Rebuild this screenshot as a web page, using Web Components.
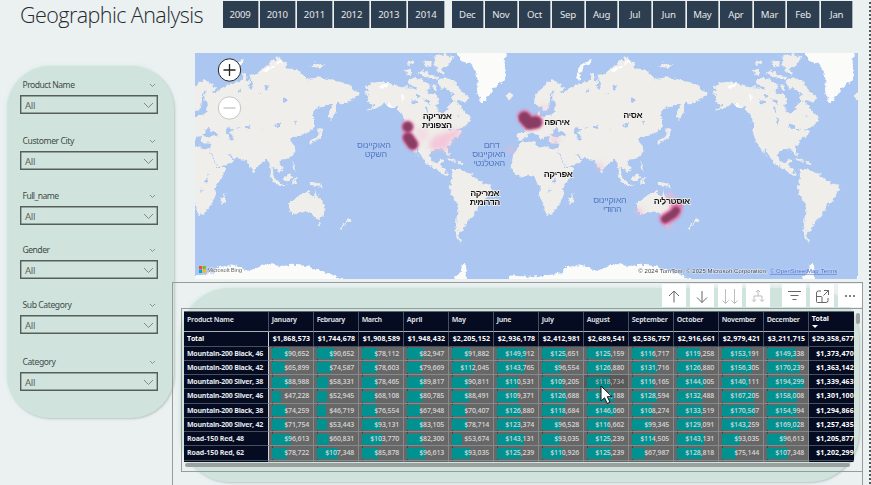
<!DOCTYPE html>
<html lang="en">
<head>
<meta charset="utf-8">
<title>Geographic Analysis</title>
<style>
html,body{margin:0;width:871px;height:485px;overflow:hidden;background:#ebf0f1;font-family:"Open Sans","Noto Sans",sans-serif}
</style>
</head>
<body>
<geo-report></geo-report>
<script>
const define = (name, html, setup) => customElements.define(name, class extends HTMLElement {
  connectedCallback() {
    if (this.shadowRoot) return;
    const t = document.createElement('template');
    t.innerHTML = typeof html === 'function' ? html(this) : html;
    this.attachShadow({mode: 'open'}).append(t.content.cloneNode(true));
    if (setup) setup(this);
  }
});

/* Text line whose tracking is adjusted to span the width in "w". */
define('fit-text', '<style>:host{display:inline-block;white-space:pre}span{display:inline-block}</style><span><slot></slot></span>', el => {
  const w = +el.getAttribute('w'), s = el.shadowRoot.querySelector('span'), n = el.textContent.length;
  const now = s.getBoundingClientRect().width;
  if (w && now) { s.style.letterSpacing = ((w - now) / n) + 'px'; el.style.width = w + 'px'; }
});

define('tile-slicer', el => `<style>
:host{display:flex;gap:1px;height:27px}
div{flex:1;display:flex;align-items:center;justify-content:center;background:#2d3e50;color:#e6e8ea;font-size:9.6px;font-family:"Noto Sans",sans-serif;border-right:1px solid #a9b2b7;letter-spacing:-.2px;box-sizing:border-box}
</style>${el.getAttribute('items').split(' ').map(i => `<div>${i}</div>`).join('')}`);

define('drop-filter', el => `<style>
:host{display:flex;flex-direction:column;gap:4px}
header{display:flex;justify-content:space-between;align-items:center;height:12px;padding:0 2px 0 2.500px;font:8.6px "Noto Sans",sans-serif;color:#414b48}
.box{box-sizing:border-box;height:19px;border:1px solid #565e5b;box-shadow:inset 0 0 0 .4px #565e5b;display:flex;align-items:center;justify-content:space-between;padding:1px 3px 0 4px;font:9.6px "Noto Sans",sans-serif;color:#5c6663}
svg{fill:none;stroke:#7d8a86}
</style><header><fit-text w="${el.getAttribute('w')}">${el.getAttribute('label')}</fit-text><svg width="7" height="5"><path d="M1 1l2.5 2.5L6 1" stroke-width=".9"/></svg></header>
<div class="box"><fit-text w="10">All</fit-text><svg width="11" height="7"><path d="M1 1l4.5 4.5L10 1" stroke-width="1"/></svg></div>`);

define('filter-pane', `<style>
:host{display:block;box-sizing:border-box;width:167px;height:352px;border-radius:43px;background:#d0e4dd;box-shadow:1px 1px 2px #bfc7c4,0 0 4px #cfebe1;padding:13px 16px 0 13px}
::slotted(*){margin-bottom:var(--gap,21px)}
</style><slot></slot>`);

const world = `
<g filter="url(#coast)"><g fill="#efeeea">
<path d="M-51 429L-19 423L-6 425L-8 435L6 443L21 439L46 447L60 448L62 459L72 484L81 504L108 504L101 524L81 554L76 569L79 589L66 601L62 619L46 639L26 645L20 637L14 609L4 584L6 559L-6 544L-8 531L-29 527L-54 533L-69 521L-82 504L-79 479L-69 454Z"/>
<path d="M110 577L103 609L94 614L91 596L102 586Z"/>
<path d="M-61 421V399H-39L-36 387L-46 377L-29 371L-22 364L-4 351V338L4 336L6 349L36 347L41 331H54L40 328L43 316L36 309L30 330L18 334L12 318L4 322L-12 311L-8 286L12 264L26 247L46 241L70 255L80 270L66 271L72 280L90 272L98 262L120 252L150 242L160 243L156 222L166 220L172 244L182 235L178 224L200 222L215 208L240 190L262 170L272 180L292 188L285 205L320 208L340 225L350 238L385 232L430 240L470 252L500 275L512 283L495 290L485 300L460 308L442 312L436 340L424 362L416 350L418 330L430 312L415 314L400 320L375 325L363 340L372 358V378L358 395L345 402L330 405L316 410L306 412L302 424L312 436L318 446L309 466L290 477L270 481L266 490L281 506L272 516L264 512L255 506L248 500L250 525L260 545L253 543L243 525L240 495L230 474L217 486L202 500L191 519L180 498L170 480L150 476L133 474L112 458L125 475L133 483L120 493L85 502L75 482L60 450L64 428L33 427L30 414L36 408L20 410L16 420L8 412L0 398L-2 396L14 410L7 420L4 412L-10 398L-30 402L-39 413L-48 423Z"/>
<path d="M-50 372L-42 362L-50 350L-46 334L-38 336L-30 352L-26 366ZM-62 362L-60 348L-52 348V360Z"/>
<path d="M360 200L375 186L390 194L404 196L388 203L370 202Z"/>
<path d="M356 424L370 416L383 412L388 394L385 384L400 388L392 400L389 418L374 424L362 432Z"/>
<path d="M525 260L540 250L560 243L600 250L635 262L660 262L700 270L725 282L740 282L748 300L738 318L752 342L764 336L775 318L790 303L805 310L825 335L845 355L830 375L800 390L817 396L795 415L780 430L770 445L779 468L770 465L760 448L735 447L722 460L724 485L740 490L748 479L758 480L753 500L765 510L768 520L778 522L772 528L757 522L735 505L708 490L698 474L680 445L676 452L686 474L670 452L655 425L645 400V370L640 345L615 320L590 310L570 318L553 327L530 332L552 316L530 308L538 290L522 276L540 272Z"/>
<path d="M785 507H800L830 515L850 525L870 545L905 558L895 585L885 600L865 620L850 650L830 665L822 685L808 695L806 715L816 728L800 720L796 690L800 650L805 615L785 585L776 560L786 540Z"/>
<path d="M762 477L780 475L800 486L785 484ZM804 487L820 486L818 493L806 492Z"/>
<path d="M655 240L675 232L700 240L720 255L715 275L690 275L680 262L660 258ZM645 210L665 206L668 224L650 226ZM680 220L700 210L722 226L745 228L740 236L700 230ZM730 170L765 162L790 170L775 195L756 205L765 225L740 215L735 190ZM740 240L765 232L800 250L812 270L835 294L826 308L808 300L798 306L780 295L792 284L775 268L748 260ZM700 185L725 180L724 200L704 198ZM655 185L668 178L670 190L655 196ZM725 256L740 258L740 274L728 270Z"/>
<path d="M294 610L320 595L335 580L350 578L358 571L362 585L372 590L378 569L386 592L400 608L407 625L400 650L388 658L374 652L364 640L350 634L325 640L303 645L298 625ZM384 668L394 669L390 678L385 675Z"/>
<path d="M474 654L482 660L472 668L464 676L452 690L447 686L468 668ZM354 544L385 550L400 566L385 560L362 558ZM278 538L298 518L305 526L302 542L286 544ZM238 522L248 528L268 550L290 558L268 558L250 542ZM310 534L324 536L314 540L318 552L310 552ZM306 486L312 488L314 506L322 516L310 508Z"/>
<path d="M944 287L958 280L970 285L966 293L953 298Z"/>
</g>
<g fill="#fbfbfa">
<path d="M122 242L116 222L124 200L140 188L162 180L158 187L134 200L126 220L130 240Z"/>
<path d="M795 150H950L944 185L946 220L940 243L910 265L895 285L888 306L873 306L862 280V235L858 215L842 192L815 184Z"/>
<path d="M-90 860V826L-30 830L15 828L70 820L84 802L118 796L150 802L165 814L190 808L212 797L240 792L270 798L310 794L350 798L380 808L430 825L460 840V860ZM780 860L798 830L812 815L815 797L828 790L832 860ZM970 860L985 836L1010 826V860Z"/>
</g>
<g fill="#abc7f1">
<path d="M40 405L46 390L58 386L66 394L76 392L88 406L62 410ZM104 390L116 382L126 388L122 400L132 416L120 420L112 404ZM168 382L182 376L180 386L170 388ZM250 378L262 372L272 366L270 374L258 382ZM224 258L234 252L236 268L226 272ZM284 292L290 298L286 310L278 306ZM204 280L214 276L210 284Z"/>
<path d="M36 347L48 342L50 322L58 312L44 302L42 282L50 272L44 268L35 288L34 302L38 320L34 336ZM42 538L52 538L50 550L42 550ZM34 560L38 572L34 576ZM52 520L56 526L52 530Z"/>
<path d="M740 292L752 300L772 310L780 294L764 286L748 282ZM750 376L768 372L774 384L764 390L758 384ZM772 388L790 386L780 394ZM706 320L712 320L716 340L708 336ZM676 286L688 282L692 292L680 294ZM664 300L684 304L680 311L666 308ZM700 295L722 302L718 310L704 306ZM800 340L812 344L808 350ZM716 355L722 358L720 372L714 366Z"/>
<path d="M180 240L176 262L184 270L190 255L184 238ZM150 264L154 274L146 280ZM215 385L222 384L218 390ZM140 384L150 380L145 388ZM310 370L320 360L316 372Z"/>
</g>
<g fill="none" stroke="#fff" stroke-width="7" stroke-linecap="round"><path d="M226 212L252 198M572 262L594 254M592 313L610 320M636 286L638 300M262 190L278 184"/></g></g>`;

define('heat-map', `<style>
:host{display:block;position:relative;width:663px;height:226px;background:#abc7f1;overflow:hidden}
svg{display:block}
text{font-family:"Liberation Sans","DejaVu Sans",sans-serif;text-anchor:middle}
.land{font-weight:bold;font-size:27px;fill:#161616;stroke:#f4f2ef;stroke-width:4px;paint-order:stroke}
.sea{font-size:27px;fill:#5579c4}
nav{position:absolute;left:22px;top:5px;display:flex;flex-direction:column;gap:14px}
</style>
<svg width="663" height="226" viewBox="15 159 1989 678">
<defs>
<filter id="coast" x="-200" y="100" width="1300" height="800" filterUnits="userSpaceOnUse" color-interpolation-filters="sRGB"><feTurbulence type="fractalNoise" baseFrequency=".08" numOctaves="3" seed="4"/><feDisplacementMap in="SourceGraphic" scale="16" xChannelSelector="R" yChannelSelector="G"/></filter>
<filter id="glow" x="0" y="0" width="2100" height="900" filterUnits="userSpaceOnUse"><feGaussianBlur stdDeviation="4"/></filter>
<filter id="core" x="0" y="0" width="2100" height="900" filterUnits="userSpaceOnUse"><feGaussianBlur stdDeviation="3"/></filter>
<filter id="faint" x="0" y="0" width="2100" height="900" filterUnits="userSpaceOnUse"><feGaussianBlur stdDeviation="8"/></filter>
<g id="world">${world}</g>
</defs>
<use href="#world"/><use href="#world" x="1044"/><use href="#world" x="2088"/>
<g filter="url(#faint)" fill="#f7b5d2"><path d="M735 408L770 398L795 388L820 392L806 406L780 425L772 440L778 458L762 448L725 450L716 430Z" opacity=".7"/><path d="M672 385H715V412L690 430Z" opacity=".3"/><ellipse cx="960" cy="449" rx="14" ry="12" opacity=".4"/><ellipse cx="1093" cy="418" rx="15" ry="8" opacity=".6"/><ellipse cx="1230" cy="500" rx="8" ry="12" opacity=".6"/><circle cx="1348" cy="634" r="11" opacity=".6"/><circle cx="1436" cy="677" r="9" opacity=".8"/><ellipse cx="1440" cy="594" rx="12" ry="16" opacity=".8"/><ellipse cx="1064" cy="322" rx="20" ry="8" opacity=".3"/></g>
<g fill="none" stroke="#e879ad" stroke-linecap="round" stroke-linejoin="round" stroke-width="37" filter="url(#glow)"><path d="M653 380V381M654 412L668 433"/><path d="M1003 351L1018 370L1038 366" stroke-width="43"/><path d="M1460 620L1454 640L1426 657"/></g>
<g fill="none" stroke="#8a3d63" stroke-linecap="round" stroke-linejoin="round" filter="url(#core)"><path d="M653 380V381M654 413L668 433" stroke-width="30"/><path d="M1003 353L1018 370L1038 367" stroke-width="35"/><path d="M1458 632L1451 641L1426 657" stroke-width="24"/></g>
<g class="land"><text x="742" y="357" textLength="88">אמריקה</text><text x="741" y="383" textLength="90">הצפונית</text><text x="885" y="588" textLength="88">אמריקה</text><text x="885" y="614" textLength="92">הדרומית</text><text x="1101" y="375" textLength="77">אירופה</text><text x="1329" y="354" textLength="58">אסיה</text><text x="1105" y="530" textLength="87">אפריקה</text><text x="1446" y="613" textLength="109">אוסטרליה</text></g>
<g class="sea"><text x="552" y="444" textLength="102">האוקיינוס</text><text x="558" y="472" textLength="68">השקט</text><text x="905" y="444" textLength="48">דרום</text><text x="897" y="472" textLength="101">האוקיינוס</text><text x="898" y="499" textLength="95">האטלנטי</text><text x="1260" y="608" textLength="101">האוקיינוס</text><text x="1267" y="636" textLength="56">ההודי</text></g>
<path fill="#f25022" d="M27 798h9v10h-9z"/><path fill="#7fba00" d="M38 798h9v10h-9z"/><path fill="#00a4ef" d="M27 809h9v10h-9z"/><path fill="#ffb900" d="M38 809h9v10h-9z"/>
<g style="font-size:18px" fill="#444" stroke="#fff" stroke-width="3" paint-order="stroke" stroke-opacity=".6"><text x="104" y="815" textLength="105" fill="#666">Microsoft Bing</text><text x="1539" y="818" textLength="388">© 2024 TomTom, © 2025 Microsoft Corporation,</text><g fill="#4468cc" stroke-opacity=".25"><text x="1813" y="818" textLength="146">© OpenStreetMap</text><text x="1917" y="818" textLength="49">Terms</text></g></g>
<path d="M1740 823h201" stroke="#5477d0" stroke-width="2"/>
</svg>
<nav><svg width="25" height="24"><circle cx="12.5" cy="12" r="11.2" fill="#fff" stroke="#222" stroke-width="1"/><path d="M6.5 12h12M12.500 6v12" stroke="#222" stroke-width="1.3"/></svg>
<svg width="25" height="24"><circle cx="12.5" cy="12" r="11.2" fill="#fff" stroke="#c4c4c4" stroke-width="1"/><path d="M6.500 12h12" stroke="#c4c4c4" stroke-width="1.300"/></svg></nav>`);

define('visual-tools', `<style>
:host{display:flex;gap:4px;justify-content:flex-end;height:23px}
i{display:block;width:24px;height:23px;background:#fff}i:nth-of-type(5){margin-left:8px}
svg{display:block;fill:none;stroke:#666;stroke-width:1}
.off{stroke:#bdbdbd}
</style>
<i><svg width="24" height="23"><path d="M12 18.500V7M7 12l5-5 5 5"/></svg></i>
<i><svg width="24" height="23"><path d="M12 7v11.500M7 13.500l5 5 5-5"/></svg></i>
<i><svg width="24" height="23" class="off"><path d="M7.500 5v14.500M4.500 16.500l3 3 3-3M16.500 5v14.500M13.500 16.500l3 3 3-3"/></svg></i>
<i><svg width="24" height="23" class="off"><path d="M12 6v6M8 17.500V12h8v5.500M6 15.500l2 2 2-2M14 15.500l2 2 2-2M10 8l2-2 2 2"/></svg></i>
<i><svg width="24" height="23"><path d="M6 7.500h13M8.500 11.500h8M10.500 15.500h4"/></svg></i>
<i><svg width="24" height="23"><path d="M11 7H8.500Q6.500 7 6.500 9v8.500q0 1 1 1h8.500q2 0 2-2V14M14 6.500h4.500V11M18.500 6.500L13.500 11.500M6.500 12.500h4.500q1 0 1 1v5"/></svg></i>
<i><svg width="24" height="23"><g fill="#666" stroke="none"><circle cx="8" cy="12" r="1.100"/><circle cx="12" cy="12" r="1.100"/><circle cx="16" cy="12" r="1.100"/></g></svg></i>`);

const months = 'January:25 February:28 March:20 April:15.500 May:14 June:14.500 July:12 August:23 September:36 October:26.500 November:34 December:33'.split(' ').map(s => s.split(':'));
const totals = '1,868,573 1,744,678 1,908,589 1,948,432 2,205,152 2,936,178 2,412,981 2,689,541 2,536,757 2,916,661 2,979,421 3,211,715'.split(' ');
const rows = [
['Mountain-200 Black, 46',76,'90,652 90,652 78,112 82,947 91,882 149,912 125,651 125,159 116,717 119,258 153,191 149,338','1,373,470'],
['Mountain-200 Black, 42',76,'65,899 74,587 78,603 79,669 112,045 143,765 96,554 126,880 131,716 126,880 156,305 170,239','1,363,142'],
['Mountain-200 Silver, 38',76,'88,988 58,331 78,465 89,817 90,811 110,531 109,205 118,734 116,165 144,005 140,111 194,299','1,339,463'],
['Mountain-200 Silver, 46',76,'47,228 52,945 68,108 80,785 88,491 109,371 126,688 138,188 128,594 132,488 167,205 158,008','1,301,100'],
['Mountain-200 Black, 38',76,'74,259 46,719 76,554 67,948 70,407 126,880 118,684 146,060 108,274 133,519 170,567 154,994','1,294,866'],
['Mountain-200 Silver, 42',76,'71,754 53,443 93,131 83,105 78,714 123,374 96,528 116,662 99,345 129,091 143,259 169,028','1,257,435'],
['Road-150 Red, 48',57,'96,613 60,831 103,770 82,300 53,674 143,131 93,035 125,239 114,505 143,131 93,035 96,613','1,205,877'],
['Road-150 Red, 62',57,'78,722 107,348 85,878 96,613 93,035 125,239 110,926 125,239 67,987 128,818 75,144 107,348','1,202,299']];

define('data-bar', el => `<style>
:host{display:flex;align-items:center;justify-content:flex-end;box-sizing:border-box;padding-right:3.500px;color:#d3d3d3;
background:linear-gradient(#009291,#009291) 3.500px 1.500px/calc(var(--v)*.192px) 11px no-repeat,repeating-linear-gradient(#444 0 2px,transparent 2px 3px) 3px 0/1px 100% no-repeat,#676767}
:host([hover]){background-color:#606060;color:#bcbcbc;filter:brightness(.93)}
</style><fit-text w="${el.textContent.trim().length > 7 ? 29 : 25}">${el.textContent}</fit-text>`);

define('sales-matrix', () => `<style>
:host{display:grid;grid-template-columns:84.700px repeat(12,45px) 45.300px;grid-template-rows:20px 14.500px repeat(8,14.250px) 2px;width:670px;height:151px;overflow:hidden;font-size:7px;font-weight:600;color:#e6e9ee;background:#050c22;border-top:1px solid #606a72;box-sizing:border-box}
:host>*{box-sizing:border-box;border-right:1px solid #858b8c;border-bottom:1px solid #858b8c;overflow:hidden;white-space:nowrap}
.h,.n,.t{display:flex;align-items:center;padding-left:3px;border-color:#48505e}
.h{padding-bottom:4px;border-bottom-color:#aab0b5;font-weight:700;color:#d5d9df}
.t{font-weight:700;color:#fff;padding-left:4px}
.n{border-right-color:#d0d4d6;font-weight:700}
.last{justify-content:flex-end;padding:0;border-right:0}
.sort{display:block;position:relative;padding:2px 0 0 3px}
.sort svg{position:absolute;left:3px;bottom:3px}
.end{background:#676767}.dark{background:#050c22}
</style>
<div class="h"><fit-text w="46.500">Product Name</fit-text></div>${months.map(m => `<div class="h"><fit-text w="${m[1]}">${m[0]}</fit-text></div>`).join('')}<div class="h last sort" style="color:#fff"><fit-text w="17">Total</fit-text><svg width="6" height="3"><path d="M0 0h6L3 3z" fill="#fff"/></svg></div>
<div class="t n" style="padding-left:3px"><fit-text w="17">Total</fit-text></div>${totals.map(t => `<div class="t"><fit-text w="37.500">$${t}</fit-text></div>`).join('')}<div class="t last"><fit-text w="42">$29,358,677</fit-text></div>
${rows.map((r, i) => `<div class="n"><fit-text w="${r[1]}">${r[0]}</fit-text></div>${r[2].split(' ').map((v, j) => `<data-bar style="--v:${parseFloat(v.replace(',', '.'))}" ${i === 2 && j === 7 ? 'hover' : ''}>$${v}</data-bar>`).join('')}<div class="t last"><fit-text w="37.800">$${r[3]}</fit-text></div>`).join('')}
<div class="dark"></div>${'<div class="end"></div>'.repeat(12)}<div class="dark"></div>`);

define('matrix-visual', `<style>
:host{display:block;position:relative;box-sizing:border-box;width:691px;height:210px;border:1px solid #979b9b;border-bottom:0;padding-top:1px}
.card{position:absolute;left:7px;top:5px;width:679px;height:194px;border-radius:50px;background:#d0e4dd;box-shadow:1px 1px 2px #bfc7c4,0 0 4px #cfebe1}
visual-tools,.frame{position:relative}
.frame{box-sizing:border-box;margin:1px -1px 0 8px;height:164px;border:1px solid #979b9b;padding:2px 0 0 2px;display:grid;grid-template-columns:670px 8px;grid-template-rows:151px 7px}
b{display:block;border-radius:3px;background:#9a9fa0}
.v{width:4px;height:11px;margin:2px 0 0 2px}
.x{height:4px;margin:1px 4px 0 1px}
.cursor{position:absolute;left:427px;top:102px}
</style><div class="card"></div><visual-tools></visual-tools>
<div class="frame"><sales-matrix></sales-matrix><b class="v"></b><b class="x"></b></div>
<svg class="cursor" width="14" height="20"><path d="M1 1V16L4.500 12.800L7.200 18.500L10 17.200L7.300 11.700H12Z" fill="#fff" stroke="#111" stroke-width="1"/></svg>`);

define('geo-report', `<style>
:host{display:grid;grid-template-columns:195px 663px 11px 2px;grid-template-rows:53px 226px 206px;width:871px;height:485px;box-sizing:border-box;background:#ebf0f1;overflow:hidden}
.top{grid-column:1/4;display:flex;padding-top:1px;box-sizing:border-box}
h1{margin:0;font-weight:300;font-size:21.500px;line-height:28px;color:#252a2e;padding-left:20px;width:202.500px;font-family:"Open Sans",sans-serif}
aside{grid-column:1;grid-row:2/4;padding:13px 0 0 7px}
heat-map{grid-column:2;grid-row:2}
matrix-visual{grid-column:2;grid-row:3;margin:3px 0 0 -23px}
.edge{grid-column:4;grid-row:1/4;background:repeating-linear-gradient(transparent 0 2px,#555 2px 4px)}
.y{width:222px;margin-right:7px}.m{width:402px}
</style>
<div class="top"><h1><fit-text w="183">Geographic Analysis</fit-text></h1><tile-slicer class="y" items="2009 2010 2011 2012 2013 2014"></tile-slicer><tile-slicer class="m" items="Dec Nov Oct Sep Aug Jul Jun May Apr Mar Feb Jan"></tile-slicer></div>
<aside><filter-pane>
<drop-filter label="Product Name" w="52"></drop-filter>
<drop-filter label="Customer City" w="51.500"></drop-filter>
<drop-filter label="Full_name" w="36" style="--gap:19px;margin-top:-1px"></drop-filter>
<drop-filter label="Gender" w="27" style="--gap:20px"></drop-filter>
<drop-filter label="Sub Category" w="49" style="--gap:22px"></drop-filter>
<drop-filter label="Category" w="33"></drop-filter>
</filter-pane></aside>
<heat-map></heat-map>
<matrix-visual></matrix-visual>
<div class="edge"></div>`);
</script>
</body>
</html>
